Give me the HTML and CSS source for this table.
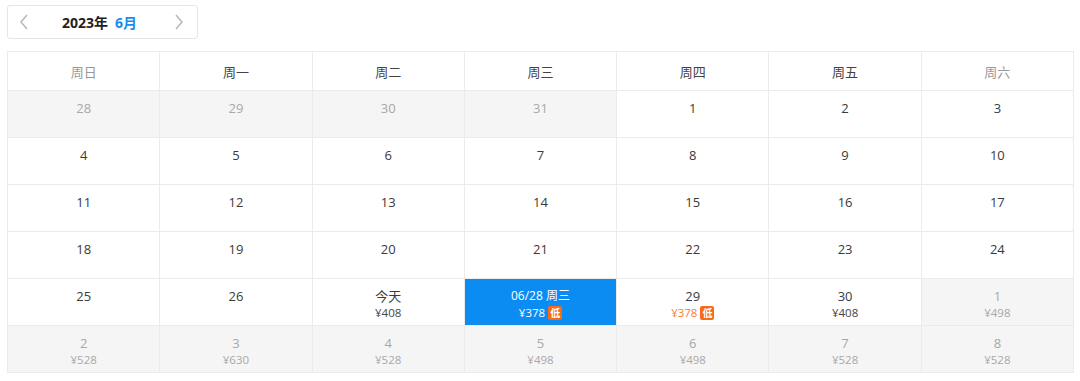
FILE: index.html
```html
<!DOCTYPE html>
<html lang="zh">
<head>
<meta charset="utf-8">
<link rel="stylesheet" href="styles.css">
</head>
<body>
<div class="page">
  <div class="nav">
    <span class="arrow"><svg width="10" height="16" viewBox="0 0 10 16"><path d="M8 1 L2 8 L8 15" fill="none" stroke="#b5b5b5" stroke-width="1.4"/></svg></span>
    <span class="title"><b class="year">2023年</b><b class="month">6月</b></span>
    <span class="arrow"><svg width="10" height="16" viewBox="0 0 10 16"><path d="M2 1 L8 8 L2 15" fill="none" stroke="#b5b5b5" stroke-width="1.4"/></svg></span>
  </div>
  <div class="cal">
    <div class="hd weekend">周日</div><div class="hd">周一</div><div class="hd">周二</div><div class="hd">周三</div><div class="hd">周四</div><div class="hd">周五</div><div class="hd weekend">周六</div>

    <div class="cell out"><span class="d">28</span></div>
    <div class="cell out"><span class="d">29</span></div>
    <div class="cell out"><span class="d">30</span></div>
    <div class="cell out"><span class="d">31</span></div>
    <div class="cell"><span class="d">1</span></div>
    <div class="cell"><span class="d">2</span></div>
    <div class="cell"><span class="d">3</span></div>

    <div class="cell"><span class="d">4</span></div>
    <div class="cell"><span class="d">5</span></div>
    <div class="cell"><span class="d">6</span></div>
    <div class="cell"><span class="d">7</span></div>
    <div class="cell"><span class="d">8</span></div>
    <div class="cell"><span class="d">9</span></div>
    <div class="cell"><span class="d">10</span></div>

    <div class="cell"><span class="d">11</span></div>
    <div class="cell"><span class="d">12</span></div>
    <div class="cell"><span class="d">13</span></div>
    <div class="cell"><span class="d">14</span></div>
    <div class="cell"><span class="d">15</span></div>
    <div class="cell"><span class="d">16</span></div>
    <div class="cell"><span class="d">17</span></div>

    <div class="cell"><span class="d">18</span></div>
    <div class="cell"><span class="d">19</span></div>
    <div class="cell"><span class="d">20</span></div>
    <div class="cell"><span class="d">21</span></div>
    <div class="cell"><span class="d">22</span></div>
    <div class="cell"><span class="d">23</span></div>
    <div class="cell"><span class="d">24</span></div>

    <div class="cell"><span class="d">25</span></div>
    <div class="cell"><span class="d">26</span></div>
    <div class="cell"><span class="d">今天</span><span class="p">¥408</span></div>
    <div class="cell sel"><span class="d">06/28 周三</span><span class="p">¥378<i class="low">低</i></span></div>
    <div class="cell"><span class="d">29</span><span class="p cheap">¥378<i class="low">低</i></span></div>
    <div class="cell"><span class="d">30</span><span class="p">¥408</span></div>
    <div class="cell out"><span class="d">1</span><span class="p">¥498</span></div>

    <div class="cell out"><span class="d">2</span><span class="p">¥528</span></div>
    <div class="cell out"><span class="d">3</span><span class="p">¥630</span></div>
    <div class="cell out"><span class="d">4</span><span class="p">¥528</span></div>
    <div class="cell out"><span class="d">5</span><span class="p">¥498</span></div>
    <div class="cell out"><span class="d">6</span><span class="p">¥498</span></div>
    <div class="cell out"><span class="d">7</span><span class="p">¥528</span></div>
    <div class="cell out"><span class="d">8</span><span class="p">¥528</span></div>
  </div>
</div>
</body>
</html>
```
FILE: styles.css
```css
html, body {
  margin: 0;
  padding: 0;
  background: #fff;
}
.page {
  padding: 5px 6px 0 7px;
  font-family: "Open Sans", "Noto Sans CJK SC", sans-serif;
  color: #333;
}
.nav {
  height: 32px;
  width: 165px;
  border: 1px solid #e6e6e6;
  border-radius: 3px;
  display: flex;
  align-items: center;
  justify-content: space-between;
  padding: 0 13px 0 11px;
  box-sizing: content-box;
}
.arrow {
  display: flex;
  align-items: center;
}
.title {
  font-size: 14px;
  display: flex;
  gap: 7px;
  margin-left: -4px;
}
.year {
  color: #222;
  font-weight: 700;
}
.month {
  color: #1a8cf0;
  font-weight: 700;
}
.cal {
  margin-top: 12px;
  width: 1065px;
  display: grid;
  grid-template-columns: repeat(7, 1fr);
  grid-template-rows: 38px repeat(6, 46px);
  gap: 1px;
  background: #ebebeb;
  border: 1px solid #ebebeb;
}
.hd {
  background: #fff;
  display: flex;
  align-items: center;
  justify-content: center;
  font-size: 13px;
  color: #444;
}
.hd.weekend {
  color: #999;
}
.cell {
  background: #fff;
  display: flex;
  flex-direction: column;
  align-items: center;
  padding-top: 8px;
  box-sizing: border-box;
  font-size: 13px;
  color: #3a3a3a;
}
.cell .d {
  line-height: 18px;
}
.cell .p {
  font-size: 11.5px;
  line-height: 16px;
  display: flex;
  align-items: center;
  color: #444;
}
.cell.out {
  background: #f5f5f5;
  color: #a8a8a8;
}
.cell.out .p {
  color: #a8a8a8;
}
.cell.sel {
  background: #0a8cf2;
  color: #fff;
  font-size: 12px;
}
.cell.sel .p {
  color: #fff;
}
.cell .p.cheap {
  color: #ff7a2e;
}
.low {
  font-style: normal;
  display: inline-flex;
  align-items: center;
  justify-content: center;
  width: 14px;
  height: 14px;
  margin-left: 3px;
  background: #f86a14;
  color: #fff;
  font-size: 10px;
  font-weight: 700;
  border-radius: 2px;
}
```
